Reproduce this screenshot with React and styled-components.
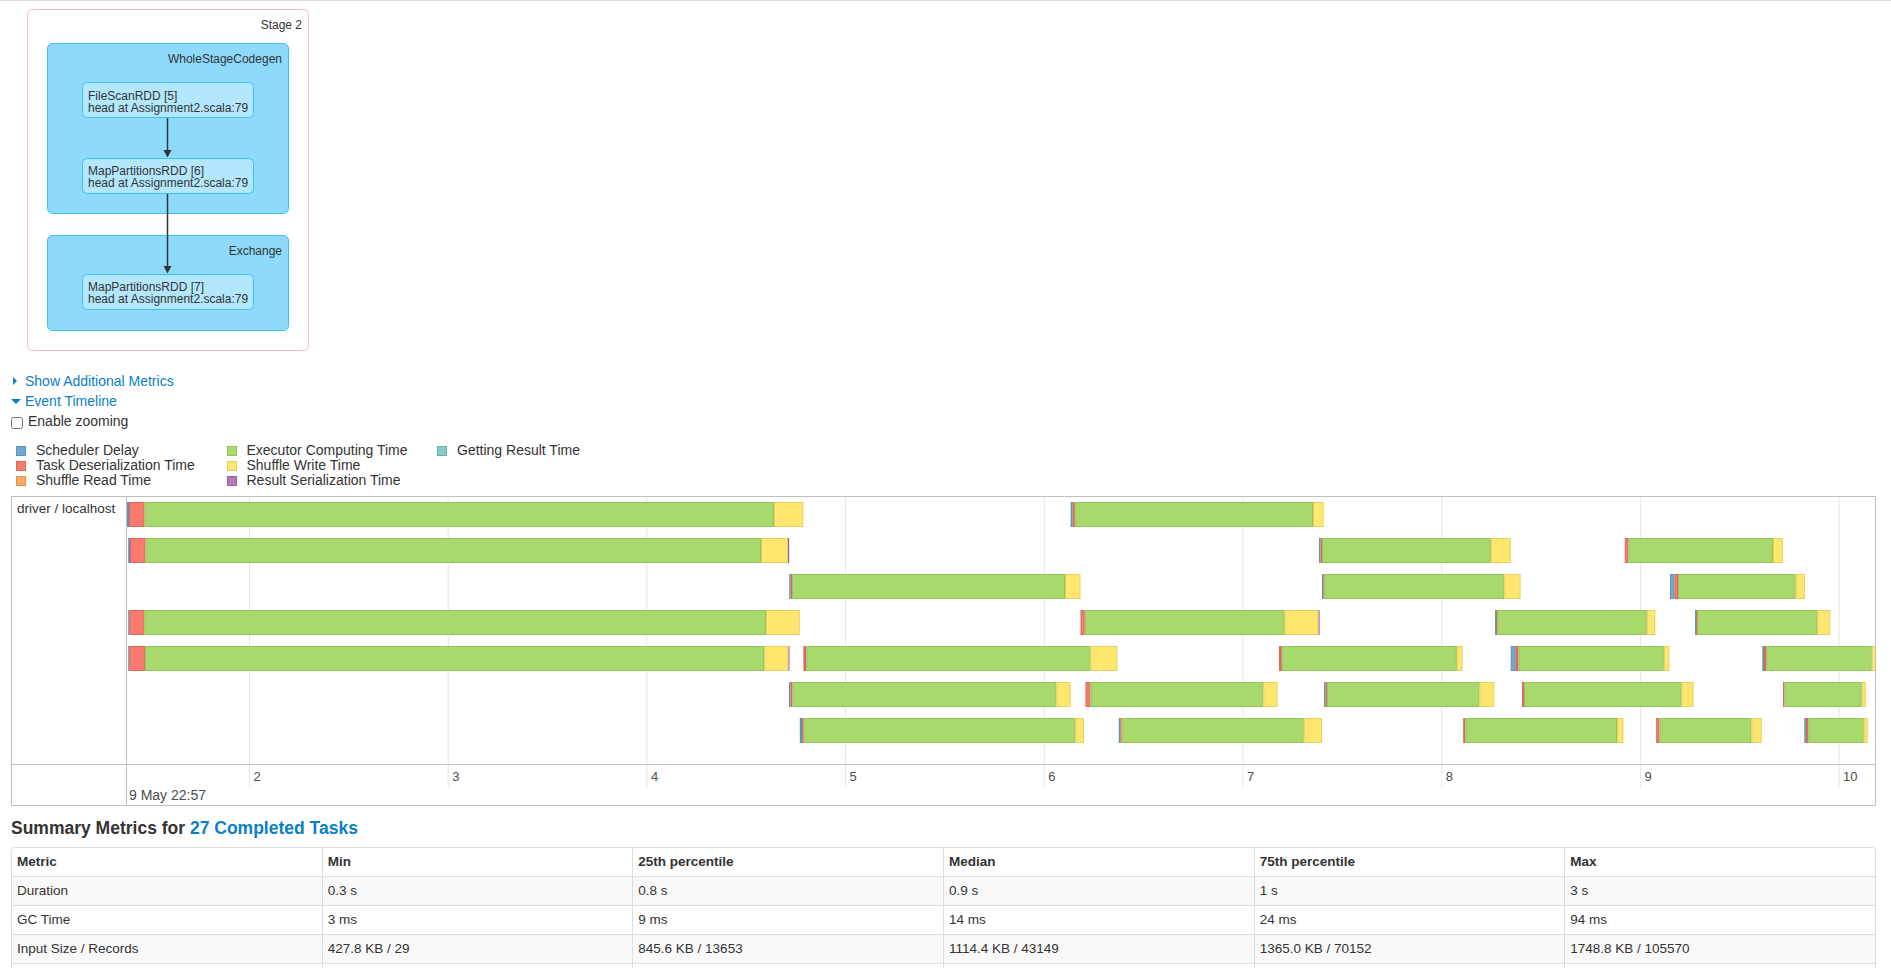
import React from 'react'
import styled, { createGlobalStyle } from 'styled-components'

const GlobalStyle = createGlobalStyle`
  html, body {
    margin: 0;
    padding: 0;
    background: #fff;
  }
  body {
    font-family: "Liberation Sans", Arial, sans-serif;
    font-size: 13.5px;
    line-height: 20px;
    color: #333;
  }
`

// fill / stroke pairs for each task phase
const PHASES = {
  b: { fill: '#72a9d2', stroke: '#5e93ba', label: 'Scheduler Delay' },
  r: { fill: '#fa7a6d', stroke: '#de675b', label: 'Task Deserialization Time' },
  o: { fill: '#fdaa5f', stroke: '#dc9350', label: 'Shuffle Read Time' },
  g: { fill: '#a8d96c', stroke: '#95c45d', label: 'Executor Computing Time' },
  y: { fill: '#ffe76f', stroke: '#e6cf5a', label: 'Shuffle Write Time' },
  p: { fill: '#b67ab8', stroke: '#98649a', label: 'Result Serialization Time' },
  t: { fill: '#80cfc1', stroke: '#69b4a7', label: 'Getting Result Time' },
}

const LEGEND_ORDER = ['b', 'r', 'o', 'g', 'y', 'p', 't']

// each task: phases string, then the x boundaries of those phases (page px)
const ROWS = [
  [
    ['brgy', 126.7, 129, 144.5, 774, 803.4],
    ['brgy', 1070.6, 1072.6, 1074.8, 1313, 1323.6],
  ],
  [
    ['brgyp', 128.2, 130, 145.4, 761, 788, 789.2],
    ['brgy', 1319, 1320.5, 1322, 1490.8, 1510.7],
    ['rgy', 1624.8, 1628.3, 1773, 1782.8],
  ],
  [
    ['brgy', 789.2, 790.6, 792, 1065, 1080.5],
    ['brgy', 1322, 1323.2, 1324.3, 1504.3, 1520.6],
    ['brgy', 1670, 1674.4, 1678, 1795.6, 1804.8],
  ],
  [
    ['brgy', 128.2, 129.2, 144.3, 766, 799.7],
    ['rgyp', 1080.5, 1084.7, 1284.6, 1318.6, 1319.6],
    ['brgy', 1495, 1496, 1497.2, 1646.8, 1655.3],
    ['brgy', 1695, 1696, 1697, 1817.5, 1830.3],
  ],
  [
    ['brgyp', 128.2, 129.2, 144.9, 764, 788.5, 789.5],
    ['rgy', 803.4, 806.2, 1090.4, 1117.3],
    ['rgy', 1279, 1281.8, 1456.8, 1462.5],
    ['brgy', 1510.7, 1515.6, 1518.5, 1663.8, 1669.4],
    ['brgy', 1762.3, 1764, 1766.3, 1871.7, 1876],
  ],
  [
    ['brgy', 789, 790.5, 792.5, 1056.4, 1070.6],
    ['rgy', 1085.5, 1090.4, 1263.3, 1277.5],
    ['brgy', 1324, 1325.5, 1327, 1479.5, 1494.4],
    ['rgy', 1522, 1524, 1681.5, 1693.5],
    ['rgy', 1783, 1784.5, 1861.7, 1865.7],
  ],
  [
    ['brgy', 799.8, 802, 803.6, 1075.5, 1084],
    ['brgy', 1118.8, 1120.2, 1121.6, 1303.7, 1322],
    ['rgy', 1463.2, 1465.3, 1617, 1623.4],
    ['rgy', 1656.2, 1659.5, 1751.5, 1761.7],
    ['brgy', 1804.3, 1805.9, 1808.3, 1863.7, 1867.7],
  ],
]

const CHART_LEFT = 127
const ROW_TOP = 5
const ROW_STEP = 36
const BAR_H = 25
const TICKS = [2, 3, 4, 5, 6, 7, 8, 9, 10].map(n => ({ n, x: 249.5 + 198.7 * (n - 2) - CHART_LEFT }))

const METRICS = [
  ['Duration', '0.3 s', '0.8 s', '0.9 s', '1 s', '3 s'],
  ['GC Time', '3 ms', '9 ms', '14 ms', '24 ms', '94 ms'],
  ['Input Size / Records', '427.8 KB / 29', '845.6 KB / 13653', '1114.4 KB / 43149', '1365.0 KB / 70152', '1748.8 KB / 105570'],
  ['Shuffle Write Size / Records', '12.1 KB / 1', '23.9 KB / 1', '24.6 KB / 1', '25.2 KB / 1', '26.0 KB / 1'],
]

function App() {
  return (
    <>
      <GlobalStyle />
      <Page>
        <DagSvg viewBox="11 1 310 352">
          <DagBox $kind="stage" x="27.5" y="9.5" width="281" height="341" rx="5" />
          <DagText x="302" y="28.5" textAnchor="end">Stage 2</DagText>

          <DagBox $kind="cluster" x="47.5" y="43.5" width="241" height="170" rx="5" />
          <DagText x="282" y="62.5" textAnchor="end">WholeStageCodegen</DagText>
          <DagBox $kind="cluster" x="47.5" y="235.5" width="241" height="95" rx="5" />
          <DagText x="282" y="254.5" textAnchor="end">Exchange</DagText>

          <DagBox $kind="node" x="82.5" y="82.5" width="171" height="35" rx="5" />
          <DagText x="88" y="99.5">FileScanRDD [5]</DagText>
          <DagText x="88" y="111.5">head at Assignment2.scala:79</DagText>

          <DagBox $kind="node" x="82.5" y="158.5" width="171" height="35" rx="5" />
          <DagText x="88" y="175">MapPartitionsRDD [6]</DagText>
          <DagText x="88" y="187">head at Assignment2.scala:79</DagText>

          <DagBox $kind="node" x="82.5" y="274.5" width="171" height="35" rx="5" />
          <DagText x="88" y="290.5">MapPartitionsRDD [7]</DagText>
          <DagText x="88" y="302.5">head at Assignment2.scala:79</DagText>

          <Edge x1="167.5" y1="118" x2="167.5" y2="151" />
          <EdgeHead points="163.5,150 171.5,150 167.5,157.5" />
          <Edge x1="167.5" y1="194" x2="167.5" y2="267" />
          <EdgeHead points="163.5,266 171.5,266 167.5,273.5" />
        </DagSvg>

        <Toggles>
          <ToggleLink>
            <Caret $open={false} />
            Show Additional Metrics
          </ToggleLink>
          <ToggleLink>
            <Caret $open />
            Event Timeline
          </ToggleLink>
          <CheckRow>
            <CheckBox type="checkbox" readOnly />
            Enable zooming
          </CheckRow>
        </Toggles>

        <Legend>
          {LEGEND_ORDER.map(k => (
            <LegendItem key={k}>
              <Swatch $fill={PHASES[k].fill} $stroke={PHASES[k].stroke} />
              {PHASES[k].label}
            </LegendItem>
          ))}
        </Legend>

        <TimelineFrame>
          <GroupLabel>driver / localhost</GroupLabel>
          <ItemsCell>
            <ChartSvg height="267">
              {TICKS.map(t => (
                <GridLine key={t.n} x1={t.x} y1="0" x2={t.x} y2="267" />
              ))}
              {ROWS.map((tasks, ri) =>
                tasks.map((task, ti) => {
                  const [kinds, ...xs] = task
                  const top = ROW_TOP + ri * ROW_STEP
                  return (
                    <g key={`${ri}-${ti}`}>
                      {kinds.split('').map((k, si) => {
                        const x0 = xs[si] - CHART_LEFT
                        const w = xs[si + 1] - xs[si]
                        const ph = PHASES[k]
                        if (w < 3) {
                          return <rect key={si} x={x0} y={top} width={w} height={BAR_H} fill={ph.stroke} />
                        }
                        return (
                          <rect
                            key={si}
                            x={x0 + 0.5}
                            y={top + 0.5}
                            width={w - 1}
                            height={BAR_H - 1}
                            fill={ph.fill}
                            stroke={ph.stroke}
                          />
                        )
                      })}
                    </g>
                  )
                })
              )}
            </ChartSvg>
          </ItemsCell>
          <AxisLabelCell />
          <AxisCell>
            <ChartSvg height="40">
              {TICKS.map(t => (
                <g key={t.n}>
                  <GridLine x1={t.x} y1="0" x2={t.x} y2="22" />
                  <AxisText x={t.x + 4} y="16">{t.n}</AxisText>
                </g>
              ))}
              <AxisText $major x="2" y="35">9 May 22:57</AxisText>
            </ChartSvg>
          </AxisCell>
        </TimelineFrame>

        <SummaryHeading>
          Summary Metrics for <HeadingLink>27 Completed Tasks</HeadingLink>
        </SummaryHeading>

        <MetricsTable>
          <thead>
            <tr>
              {['Metric', 'Min', '25th percentile', 'Median', '75th percentile', 'Max'].map(h => (
                <HeadCell key={h}>{h}</HeadCell>
              ))}
            </tr>
          </thead>
          <tbody>
            {METRICS.map(row => (
              <BodyRow key={row[0]}>
                {row.map((v, i) => (
                  <BodyCell key={i}>{v}</BodyCell>
                ))}
              </BodyRow>
            ))}
          </tbody>
        </MetricsTable>
      </Page>
    </>
  )
}

const Page = styled.div`
  border-top: 1px solid #dcdcdc;
  padding: 0 15px 40px 11px;
`

const DagSvg = styled.svg`
  display: block;
  width: 310px;
  height: 352px;
`

const DagBox = styled.rect`
  stroke-width: 1px;
  fill: ${p => (p.$kind === 'stage' ? '#ffffff' : p.$kind === 'cluster' ? '#8ddafc' : '#b3e7fd')};
  stroke: ${p => (p.$kind === 'stage' ? '#f8bac7' : '#3fc0f3')};
`

const DagText = styled.text`
  font-family: "Liberation Sans", Arial, sans-serif;
  font-size: 12px;
  fill: #333;
`

const Edge = styled.line`
  stroke: #333;
  stroke-width: 1.5px;
`

const EdgeHead = styled.polygon`
  fill: #333;
`

const Toggles = styled.div`
  margin-top: 18px;
  font-size: 14px;
`

const ToggleLink = styled.a`
  display: flex;
  align-items: center;
  height: 20px;
  color: #0a80c4;
  text-decoration: none;
  cursor: pointer;
`

const Caret = styled.span`
  display: inline-block;
  width: 0;
  height: 0;
  ${p =>
    p.$open
      ? `
    margin: 1px 4px 0 0;
    border-left: 5px solid transparent;
    border-right: 5px solid transparent;
    border-top: 5px solid #0a80c4;
  `
      : `
    margin: 0 8px 0 2px;
    border-top: 4px solid transparent;
    border-bottom: 4px solid transparent;
    border-left: 4px solid #0a80c4;
  `}
`

const CheckRow = styled.label`
  display: flex;
  align-items: center;
  height: 20px;
`

const CheckBox = styled.input`
  width: 12px;
  height: 12px;
  margin: 3px 5px 0 0;
`

const Legend = styled.div`
  display: grid;
  grid-auto-flow: column;
  grid-template-rows: repeat(3, 15px);
  grid-template-columns: repeat(3, 210.5px);
  margin: 12px 0 0 5px;
  font-size: 14px;
  line-height: 15px;
`

const LegendItem = styled.div`
  display: flex;
  align-items: center;
`

const Swatch = styled.span`
  box-sizing: border-box;
  width: 10px;
  height: 10px;
  margin-right: 10px;
  background: ${p => p.$fill};
  border: 1px solid ${p => p.$stroke};
`

const TimelineFrame = styled.div`
  margin-top: 8px;
  border: 1px solid #bfbfbf;
  display: grid;
  grid-template-columns: 115px 1fr;
  grid-template-rows: 267px 41px;
`

const GroupLabel = styled.div`
  box-sizing: border-box;
  border-right: 1px solid #bfbfbf;
  padding: 4px 5px;
  font-size: 13.5px;
  line-height: 16px;
  color: #333;
`

const ItemsCell = styled.div`
  overflow: hidden;
`

const AxisLabelCell = styled.div`
  border-right: 1px solid #bfbfbf;
  border-top: 1px solid #bfbfbf;
`

const AxisCell = styled.div`
  border-top: 1px solid #bfbfbf;
  overflow: hidden;
`

const ChartSvg = styled.svg`
  display: block;
  width: 100%;
`

const GridLine = styled.line`
  stroke: #e5e5e5;
  stroke-width: 1px;
`

const AxisText = styled.text`
  font-family: "Liberation Sans", Arial, sans-serif;
  font-size: ${p => (p.$major ? '14px' : '13px')};
  fill: #4d4d4d;
`

const SummaryHeading = styled.h4`
  margin: 12px 0 9px;
  font-size: 17.5px;
  line-height: 20px;
  font-weight: bold;
  color: #333;
`

const HeadingLink = styled.a`
  color: #0a80c4;
  text-decoration: none;
`

const MetricsTable = styled.table`
  width: 100%;
  table-layout: fixed;
  border-collapse: separate;
  border-spacing: 0;
  border: 1px solid #ddd;
  border-left: 0;
  border-radius: 4px;
  font-size: 13.5px;
`

const HeadCell = styled.th`
  text-align: left;
  font-weight: bold;
  padding: 4px 5px;
  line-height: 20px;
  border-left: 1px solid #ddd;
  &:first-child {
    border-top-left-radius: 4px;
  }
`

const BodyRow = styled.tr`
  &:nth-child(odd) td {
    background: #f9f9f9;
  }
`

const BodyCell = styled.td`
  padding: 4px 5px;
  line-height: 20px;
  border-left: 1px solid #ddd;
  border-top: 1px solid #ddd;
`

export default App
